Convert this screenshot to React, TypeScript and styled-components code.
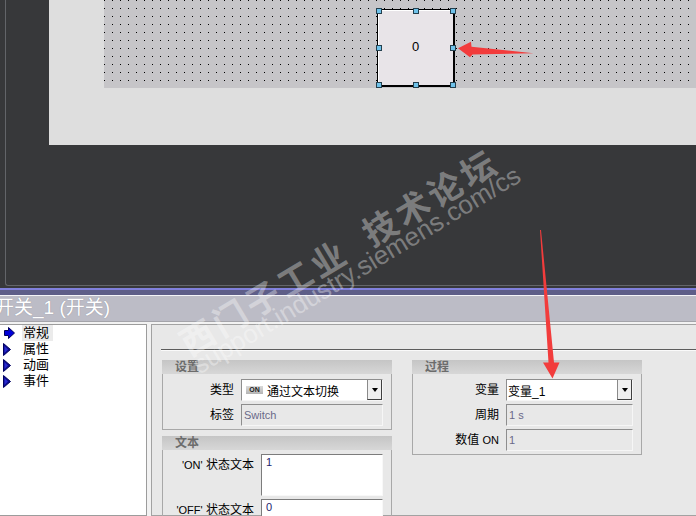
import React from "react";
import styled, { createGlobalStyle } from "styled-components";

const UI_FONT = `"Liberation Sans", "Noto Sans CJK SC", sans-serif`;

const GlobalStyle = createGlobalStyle`
  html, body { margin: 0; padding: 0; background: #f0f0f0; }
  body { font-family: ${UI_FONT}; }
  * { box-sizing: border-box; }
`;

const Page = styled.div`
  position: relative;
  width: 696px;
  height: 516px;
  overflow: hidden;
  font-family: ${UI_FONT};
  font-size: 12px;
  color: #000;
`;

/* ---------- editor workspace ---------- */

const Workspace = styled.div`
  height: 288px;
  background: #37383a;
  padding-left: 5px;
`;

const Frame = styled.div`
  height: 286px;
  border-left: 1px solid #636569;
  border-bottom: 1px solid #636569;
  border-bottom-left-radius: 3px;
`;

const Canvas = styled.div`
  margin-left: 43px;
  height: 145px;
  background: #dedede;
  padding-left: 55px;
`;

const DotGrid = styled.div`
  position: relative;
  height: 88px;
  background-color: #000;
  background-image: linear-gradient(90deg, #c6c5c8 7px, transparent 7px),
    linear-gradient(#c6c5c8 7px, transparent 7px);
  background-size: 8px 8px;
  background-position: -7px -7px;
`;

const SwitchObject = styled.div<{ $x: number; $y: number }>`
  position: absolute;
  left: ${(p) => p.$x}px;
  top: ${(p) => p.$y}px;
  width: 78px;
  height: 78px;
  background: #e8e4e8;
  border: 1px solid #000;
  border-right-width: 2px;
  border-bottom-width: 2px;
  box-shadow: inset 1px 1px 0 #fff;
  display: flex;
  align-items: center;
  justify-content: center;
  font-size: 13px;
  padding-bottom: 2px;
`;

const Handle = styled.span<{ $x: number; $y: number }>`
  position: absolute;
  left: ${(p) => p.$x}px;
  top: ${(p) => p.$y}px;
  width: 6px;
  height: 6px;
  background: #6fc2ea;
  border: 1px solid #24404e;
`;

/* ---------- inspector ---------- */

const SplitterBar = styled.div`
  height: 7px;
  background: #5e5e88;
  border-top: 2px solid #8080dc;
`;

const InspectorTitle = styled.div`
  height: 27px;
  border-top: 1px solid #f4f4f8;
  border-bottom: 1px solid #a4a4aa;
  background: #bcbcc6;
  color: #fff;
  font-size: 19px;
  line-height: 24px;
  text-indent: -5px;
  white-space: nowrap;
  text-shadow: 0 0 1px rgba(60, 60, 80, 0.4);
`;

const Inspector = styled.div`
  display: flex;
  gap: 4px;
  height: 194px;
  padding-top: 2px;
  background: #f2f2f2;
`;

const Tree = styled.ul`
  width: 147px;
  margin: 0;
  padding: 0 0 0 3px;
  list-style: none;
  background: #fff;
  border: 1px solid #9c9c9c;
  border-left: none;
`;

const TreeItem = styled.li`
  display: flex;
  align-items: center;
  height: 16px;
`;

const TreeIcon = styled.span`
  width: 19px;
  display: flex;
  align-items: center;
`;

const TreeLabel = styled.span<{ $selected?: boolean }>`
  padding: 0 4px 0 1px;
  font-size: 13px;
  line-height: 16px;
  background: ${(p) => (p.$selected ? "#ebebeb" : "transparent")};
`;

const PropPanel = styled.div`
  flex: 1;
  background: #e8e8e8;
  border: 1px solid #a2a2a2;
  border-right: none;
`;

const Separator = styled.div`
  margin: 24px 0 9px 9px;
  border-top: 1px solid #5c5c5c;
  border-bottom: 1px solid #fafafa;
`;

const Columns = styled.div`
  display: flex;
  gap: 20px;
  padding-left: 10px;
`;

const Column = styled.div`
  width: 230px;
  display: flex;
  flex-direction: column;
  gap: 6px;
`;

const GroupHeader = styled.div`
  height: 14px;
  padding-left: 13px;
  background: linear-gradient(#c5c5c5, #d7d7d7);
  color: #6c6c6c;
  font-weight: 700;
  font-size: 12px;
  line-height: 14px;
`;

const GroupBody = styled.div<{ $labelWidth: number; $top: number }>`
  display: grid;
  grid-template-columns: ${(p) => p.$labelWidth}px 1fr;
  column-gap: 7px;
  row-gap: 3px;
  padding: ${(p) => p.$top}px 8px 3px 0;
  border: 1px solid #a8a8a8;
  border-top: none;
`;

const Label = styled.span`
  text-align: right;
  line-height: 22px;
  white-space: nowrap;
`;

const Latin = styled.span`
  font-size: 11px;
`;

const inset = `
  border: 1px solid;
  border-color: #8e8e8e #f6f6f6 #f6f6f6 #8e8e8e;
`;

const ComboBox = styled.div`
  ${inset}
  height: 22px;
  display: flex;
  align-items: center;
  background: #fff;
`;

const ComboText = styled.span`
  flex: 1;
  padding-left: 1px;
  white-space: nowrap;
`;

const Badge = styled.span`
  width: 17px;
  height: 8px;
  margin: 0 3px 0 4px;
  background: linear-gradient(#dadada, #b4b4b4);
  color: #1c1c1c;
  font-size: 7px;
  font-weight: 700;
  line-height: 8px;
  text-align: center;
`;

const DropButton = styled.span`
  width: 15px;
  height: 20px;
  display: flex;
  align-items: center;
  justify-content: center;
  background: #f0f0f0;
  border-left: 1px solid #8a8a8a;
  border-right: 1px solid #404040;
  border-bottom: 1px solid #404040;

  &::after {
    content: "";
    border-left: 3.5px solid transparent;
    border-right: 3.5px solid transparent;
    border-top: 4px solid #000;
  }
`;

const Field = styled.div`
  ${inset}
  height: 22px;
  padding-left: 2px;
  color: #6a6a88;
  font-size: 11px;
  line-height: 20px;
`;

const TextArea = styled.div<{ $height: number }>`
  border: 1px solid;
  border-color: #7c7c7c #f8f8f8 #f8f8f8 #7c7c7c;
  height: ${(p) => p.$height}px;
  background: #fff;
  padding: 1px 4px;
  color: #24246e;
  font-size: 11px;
  line-height: 13px;
`;

/* ---------- overlays ---------- */

const Watermark = styled.div`
  position: absolute;
  left: 176px;
  top: 335px;
  transform-origin: 0 0;
  transform: rotate(-31deg);
  color: rgba(255, 255, 255, 0.36);
  white-space: nowrap;
  pointer-events: none;
`;

const WatermarkTitle = styled.div`
  font-family: "Noto Sans CJK SC", sans-serif;
  font-weight: 700;
  font-size: 34px;
  line-height: 24px;
  height: 24px;
  letter-spacing: 4px;
`;

const WatermarkGap = styled.span`
  margin-left: 23px;
`;

const WatermarkUrl = styled.div`
  margin-top: 3px;
  font-family: "Liberation Sans", sans-serif;
  font-size: 26px;
  line-height: 20px;
`;

const Annotations = styled.svg`
  position: absolute;
  left: 0;
  top: 0;
  pointer-events: none;
`;

const handles: [number, number][] = [
  [-2, -2], [35, -2], [72, -2],
  [-2, 35], [72, 35],
  [-2, 72], [35, 72], [72, 72],
];

const treeItems = ["常规", "属性", "动画", "事件"];

const TriangleIcon = () => (
  <svg width="8" height="13" viewBox="0 0 8 13">
    <polygon points="0.5,0.5 7.5,6.5 0.5,12.5" fill="#0a0a8c" stroke="#000060" strokeWidth="1" />
    <polygon points="1.5,3 5,6.5 1.5,10" fill="#2a2ad0" />
  </svg>
);

const SelectedIcon = () => (
  <svg width="13" height="12" viewBox="0 0 13 12">
    <polygon
      points="1.5,3.5 5.5,3.5 5.5,0.5 11.5,6 5.5,11.5 5.5,8.5 1.5,8.5"
      fill="#0000d8"
      stroke="#00005a"
      strokeWidth="1"
    />
  </svg>
);

export default function App() {
  return (
    <Page>
      <GlobalStyle />
      <Workspace>
        <Frame>
          <Canvas>
            <DotGrid>
              <SwitchObject $x={273} $y={9}>
                0
                {handles.map(([x, y]) => (
                  <Handle key={`${x}-${y}`} $x={x} $y={y} />
                ))}
              </SwitchObject>
            </DotGrid>
          </Canvas>
        </Frame>
      </Workspace>

      <SplitterBar />
      <InspectorTitle>开关_1 (开关)</InspectorTitle>

      <Inspector>
        <Tree>
          {treeItems.map((item, i) => (
            <TreeItem key={item}>
              <TreeIcon>{i === 0 ? <SelectedIcon /> : <TriangleIcon />}</TreeIcon>
              <TreeLabel $selected={i === 0}>{item}</TreeLabel>
            </TreeItem>
          ))}
        </Tree>

        <PropPanel>
          <Separator />
          <Columns>
            <Column>
              <div>
                <GroupHeader>设置</GroupHeader>
                <GroupBody $labelWidth={71} $top={5}>
                  <Label>类型</Label>
                  <ComboBox>
                    <Badge>ON</Badge>
                    <ComboText>通过文本切换</ComboText>
                    <DropButton />
                  </ComboBox>
                  <Label>标签</Label>
                  <Field>Switch</Field>
                </GroupBody>
              </div>
              <div>
                <GroupHeader>文本</GroupHeader>
                <GroupBody $labelWidth={91} $top={4}>
                  <Label>
                    <Latin>'ON'</Latin> 状态文本
                  </Label>
                  <TextArea $height={42}>1</TextArea>
                  <Label>
                    <Latin>'OFF'</Latin> 状态文本
                  </Label>
                  <TextArea $height={42}>0</TextArea>
                </GroupBody>
              </div>
            </Column>

            <Column>
              <div>
                <GroupHeader>过程</GroupHeader>
                <GroupBody $labelWidth={86} $top={5}>
                  <Label>变量</Label>
                  <ComboBox>
                    <ComboText>变量_1</ComboText>
                    <DropButton />
                  </ComboBox>
                  <Label>周期</Label>
                  <Field>1 s</Field>
                  <Label>
                    数值 <Latin>ON</Latin>
                  </Label>
                  <Field>1</Field>
                </GroupBody>
              </div>
            </Column>
          </Columns>
        </PropPanel>
      </Inspector>

      <Watermark>
        <WatermarkTitle>
          西门子工业<WatermarkGap>技术论坛</WatermarkGap>
        </WatermarkTitle>
        <WatermarkUrl>support.industry.siemens.com/cs</WatermarkUrl>
      </Watermark>

      <Annotations width="696" height="516" viewBox="0 0 696 516">
        <polygon
          points="458,48.3 471,41.7 471.5,46.7 533.5,53.3 472.5,54.5 470,57.3"
          fill="#f23c3c"
        />
        <polygon
          points="540,230 541,230 554,362.5 559.5,362.5 552.5,378.5 543,362.5 548.5,362.5"
          fill="#f23c3c"
        />
      </Annotations>
    </Page>
  );
}
